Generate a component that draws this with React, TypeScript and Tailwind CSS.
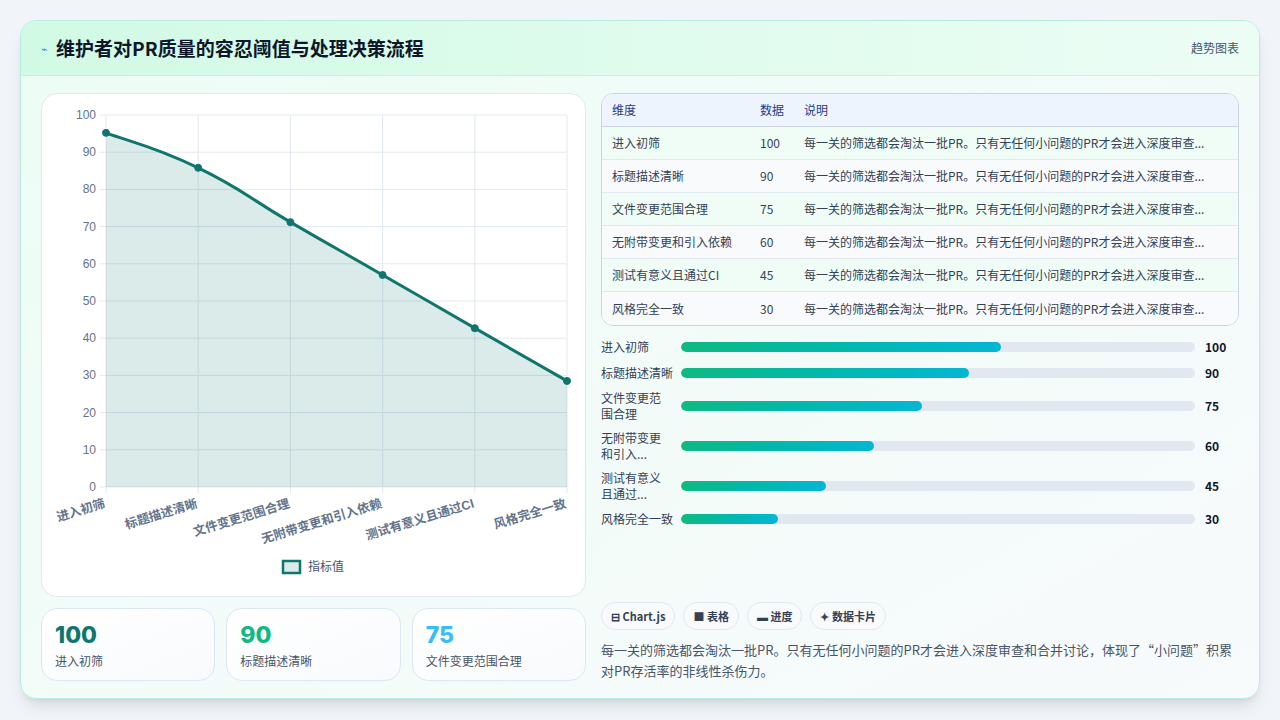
import React from "react";

const rows = [
  ["进入初筛", 100, 62.3],
  ["标题描述清晰", 90, 56.1],
  ["文件变更范围合理", 75, 46.8],
  ["无附带变更和引入依赖", 60, 37.5],
  ["测试有意义且通过CI", 45, 28.2],
  ["风格完全一致", 30, 18.8],
] as const;
const barLabels = ["进入初筛", "标题描述清晰", "文件变更范围合理", "无附带变更和引入...", "测试有意义且通过...", "风格完全一致"];
const desc = "每一关的筛选都会淘汰一批PR。只有无任何小问题的PR才会进入深度审查...";

function Chart() {
  const x0 = 64, x1 = 525, yTop = 21, yBot = 393;
  const xs = [0, 1, 2, 3, 4, 5].map((i) => x0 + (i * (x1 - x0)) / 5);
  const vals = [95.2, 85.8, 71.2, 57, 42.7, 28.5];
  const y = (v: number) => yBot - ((yBot - yTop) * v) / 100;
  const pts = vals.map((v, i) => [xs[i], y(v)]);
  let d = `M${pts[0][0]},${pts[0][1]}`;
  for (let i = 1; i < pts.length; i++) {
    const p0 = pts[Math.max(0, i - 2)], p1 = pts[i - 1], p2 = pts[i], p3 = pts[Math.min(pts.length - 1, i + 1)];
    const t = 0.25;
    d += ` C${p1[0] + (p2[0] - p0[0]) * t},${p1[1] + (p2[1] - p0[1]) * t} ${p2[0] - (p3[0] - p1[0]) * t},${p2[1] - (p3[1] - p1[1]) * t} ${p2[0]},${p2[1]}`;
  }
  const area = d + ` L${x1},${yBot} L${x0},${yBot} Z`;
  const labels = ["进入初筛", "标题描述清晰", "文件变更范围合理", "无附带变更和引入依赖", "测试有意义且通过CI", "风格完全一致"];
  return (
    <svg width="544" height="502" viewBox="0 0 544 502" style={{ fontFamily: "'Liberation Sans','Noto Sans CJK SC',sans-serif" }}>
      {[0, 10, 20, 30, 40, 50, 60, 70, 80, 90, 100].map((v) => (
        <g key={v}>
          <line x1={x0 - 6} x2={x1} y1={y(v)} y2={y(v)} stroke="#e2e8f0" />
          <text x={x0 - 10} y={y(v) + 4} textAnchor="end" fontSize="12" fill="#64748b">{v}</text>
        </g>
      ))}
      {xs.map((x, i) => (
        <line key={i} x1={x} x2={x} y1={yTop} y2={yBot + 6} stroke="#e2e8f0" />
      ))}
      <path d={area} fill="#0f766e" fillOpacity="0.15" />
      <path d={d} fill="none" stroke="#0f766e" strokeWidth="3" />
      {pts.map((p, i) => (
        <circle key={i} cx={p[0]} cy={p[1]} r="3.5" fill="#0f766e" stroke="#0f766e" />
      ))}
      {labels.map((l, i) => (
        <text key={i} x={xs[i]} y={yBot + 20} textAnchor="end" fontSize="12.5" fontWeight="600" fill="#64748b" transform={`rotate(-17 ${xs[i]} ${yBot + 20})`}>{l}</text>
      ))}
      <rect x="241" y="467" width="17" height="12" fill="#0f766e" fillOpacity="0.15" stroke="#0f766e" strokeWidth="2.5" />
      <text x="266" y="477" fontSize="12" fill="#475569">指标值</text>
    </svg>
  );
}

export default function App() {
  return (
    <div className="w-[1280px] h-[720px] bg-[#f1f5f9] p-5" style={{ fontFamily: "'Noto Sans CJK SC', sans-serif" }}>
      <div className="h-[679px] rounded-2xl border border-[#b7ecdf] bg-gradient-to-br from-[#ecfdf5] to-[#f8fafc] overflow-hidden shadow-lg flex flex-col">
        <div className="h-[55px] flex items-center justify-between px-5 bg-gradient-to-r from-[#d1fae5] to-[#ecfdf5] border-b border-[#cdeee4]">
          <div className="flex items-center gap-2">
            <span className="text-[#3b82f6] text-[11px]">⌁</span>
            <span className="text-[19px] font-bold text-[#0f172a]">维护者对PR质量的容忍阈值与处理决策流程</span>
          </div>
          <span className="text-[12px] text-[#475569]">趋势图表</span>
        </div>
        <div className="flex gap-[15px] px-5 pt-[17px]">
          <div className="w-[545px] flex flex-col gap-[11px]">
            <div className="h-[504px] rounded-2xl bg-white border border-[#e2e8f0]">
              <Chart />
            </div>
            <div className="grid grid-cols-3 gap-[11px]">
              {[["100", "text-[#0f766e]", "进入初筛"], ["90", "text-[#10b981]", "标题描述清晰"], ["75", "text-[#38bdf8]", "文件变更范围合理"]].map(([n, c, l]) => (
                <div key={l} className="h-[73px] rounded-2xl border border-[#dbe7f5] bg-gradient-to-br from-white to-[#f8fafc] px-[13px] pt-[12px]">
                  <div className={`text-[23px] leading-[28px] font-extrabold ${c}`} style={{ fontFamily: "Inter, sans-serif" }}>{n}</div>
                  <div className="text-[12px] text-[#475569] mt-[3px]">{l}</div>
                </div>
              ))}
            </div>
          </div>
          <div className="flex-1 flex flex-col">
            <div className="rounded-xl border border-[#cbd5e1] overflow-hidden bg-white">
              <div className="h-[33px] flex items-center bg-[#eef4fe] border-b border-[#cbd5e1] text-[12px] text-[#1e3a8a] px-[10px]">
                <span className="w-[148px]">维度</span><span className="w-[44px]">数据</span><span>说明</span>
              </div>
              {rows.map(([n, v], i) => (
                <div key={n} className={`h-[33px] flex items-center text-[12px] text-[#334155] px-[10px] ${i % 2 ? "bg-[#f8fafc]" : "bg-[#f0fdf7]"} ${i < 5 ? "border-b border-[#e2e8f0]" : ""}`}>
                  <span className="w-[148px]">{n}</span><span className="w-[44px]">{v}</span><span className="whitespace-nowrap">{desc}</span>
                </div>
              ))}
            </div>
            <div className="flex flex-col gap-[8px] mt-[12px]">
              {rows.map(([n, v, w], i) => (
                <div key={n} className="flex items-center">
                  <div className="w-[80px] text-[12px] leading-[16px] text-[#334155] pr-1">{barLabels[i].length > 7 ? <>{barLabels[i].slice(0, 5)}<br />{barLabels[i].slice(5)}</> : barLabels[i]}</div>
                  <div className="flex-1 h-[10px] rounded-full bg-[#e2e8f0] overflow-hidden">
                    <div className="h-full rounded-full bg-gradient-to-r from-[#10b981] to-[#06b6d4]" style={{ width: `${w}%` }} />
                  </div>
                  <div className="w-[44px] pl-[10px] text-[12px] font-bold text-[#0f172a]">{v}</div>
                </div>
              ))}
            </div>
            <div className="mt-auto">
              <div className="flex gap-[8px]">
                {["⊟ Chart.js", "■ 表格", "▬ 进度", "✦ 数据卡片"].map((c) => (
                  <span key={c} className="h-[28px] px-[9px] flex items-center rounded-full border border-[#e2e8f0] bg-[#f8fafc] text-[11px] font-semibold text-[#334155]">{c}</span>
                ))}
              </div>
              <p className="mt-[9px] text-[13px] leading-[21px] text-[#475569]">每一关的筛选都会淘汰一批PR。只有无任何小问题的PR才会进入深度审查和合并讨论，体现了“小问题”积累对PR存活率的非线性杀伤力。</p>
            </div>
          </div>
        </div>
        <div className="h-[16px]" />
      </div>
    </div>
  );
}
